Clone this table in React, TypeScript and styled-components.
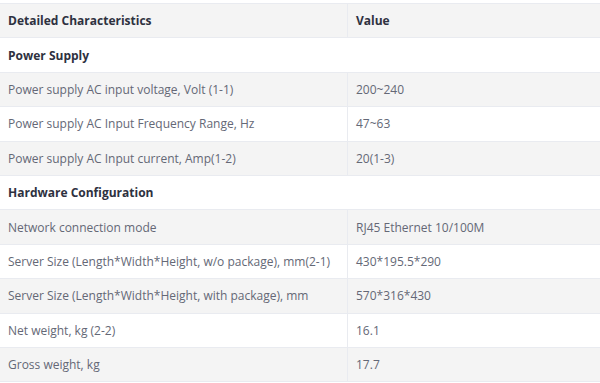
import styled, { createGlobalStyle } from "styled-components"

const Global = createGlobalStyle`
  body {
    margin: 0;
    background: #fff;
    font-family: "Open Sans", "Noto Sans", sans-serif;
  }
`

type Row = { label: string; value?: string; section?: boolean }

const rows: Row[] = [
  { label: "Power Supply", section: true },
  { label: "Power supply AC input voltage, Volt (1-1)", value: "200~240" },
  { label: "Power supply AC Input Frequency Range, Hz", value: "47~63" },
  { label: "Power supply AC Input current, Amp(1-2)", value: "20(1-3)" },
  { label: "Hardware Configuration", section: true },
  { label: "Network connection mode", value: "RJ45 Ethernet 10/100M" },
  { label: "Server Size (Length*Width*Height, w/o package), mm(2-1)", value: "430*195.5*290" },
  { label: "Server Size (Length*Width*Height, with package), mm", value: "570*316*430" },
  { label: "Net weight, kg (2-2)", value: "16.1" },
  { label: "Gross weight, kg", value: "17.7" },
]

export default function App() {
  return (
    <>
      <Global />
      <Table>
        <thead>
          <Tr>
            <Th>Detailed Characteristics</Th>
            <Th>Value</Th>
          </Tr>
        </thead>
        <tbody>
          {rows.map((r) =>
            r.section ? (
              <Tr key={r.label}>
                <Section colSpan={2}>{r.label}</Section>
              </Tr>
            ) : (
              <Tr key={r.label}>
                <Td>{r.label}</Td>
                <Td>{r.value}</Td>
              </Tr>
            )
          )}
        </tbody>
      </Table>
    </>
  )
}

const Table = styled.table`
  width: 600px;
  margin-top: 3px;
  border-collapse: collapse;
  border-top: 1px solid #e9ebf0;
  font-size: 12px;
  color: #646876;

  thead tr,
  tbody tr:nth-child(even) {
    background: #f4f4f4;
  }
  tbody tr:nth-child(odd) {
    background: #fff;
  }
`

const Tr = styled.tr`
  height: 34.4px;
  border-bottom: 1px solid #e9ebf0;
`

const Th = styled.th`
  text-align: left;
  padding: 0 8px;
  font-weight: 700;
  color: #2e3140;
  &:first-child {
    width: 331px;
    border-right: 1px solid #e9ebf0;
  }
`

const Td = styled.td`
  padding: 0 8px;
  &:first-child {
    width: 331px;
    border-right: 1px solid #e9ebf0;
  }
`

const Section = styled.td`
  padding: 0 8px;
  font-weight: 700;
  color: #2e3140;
`
